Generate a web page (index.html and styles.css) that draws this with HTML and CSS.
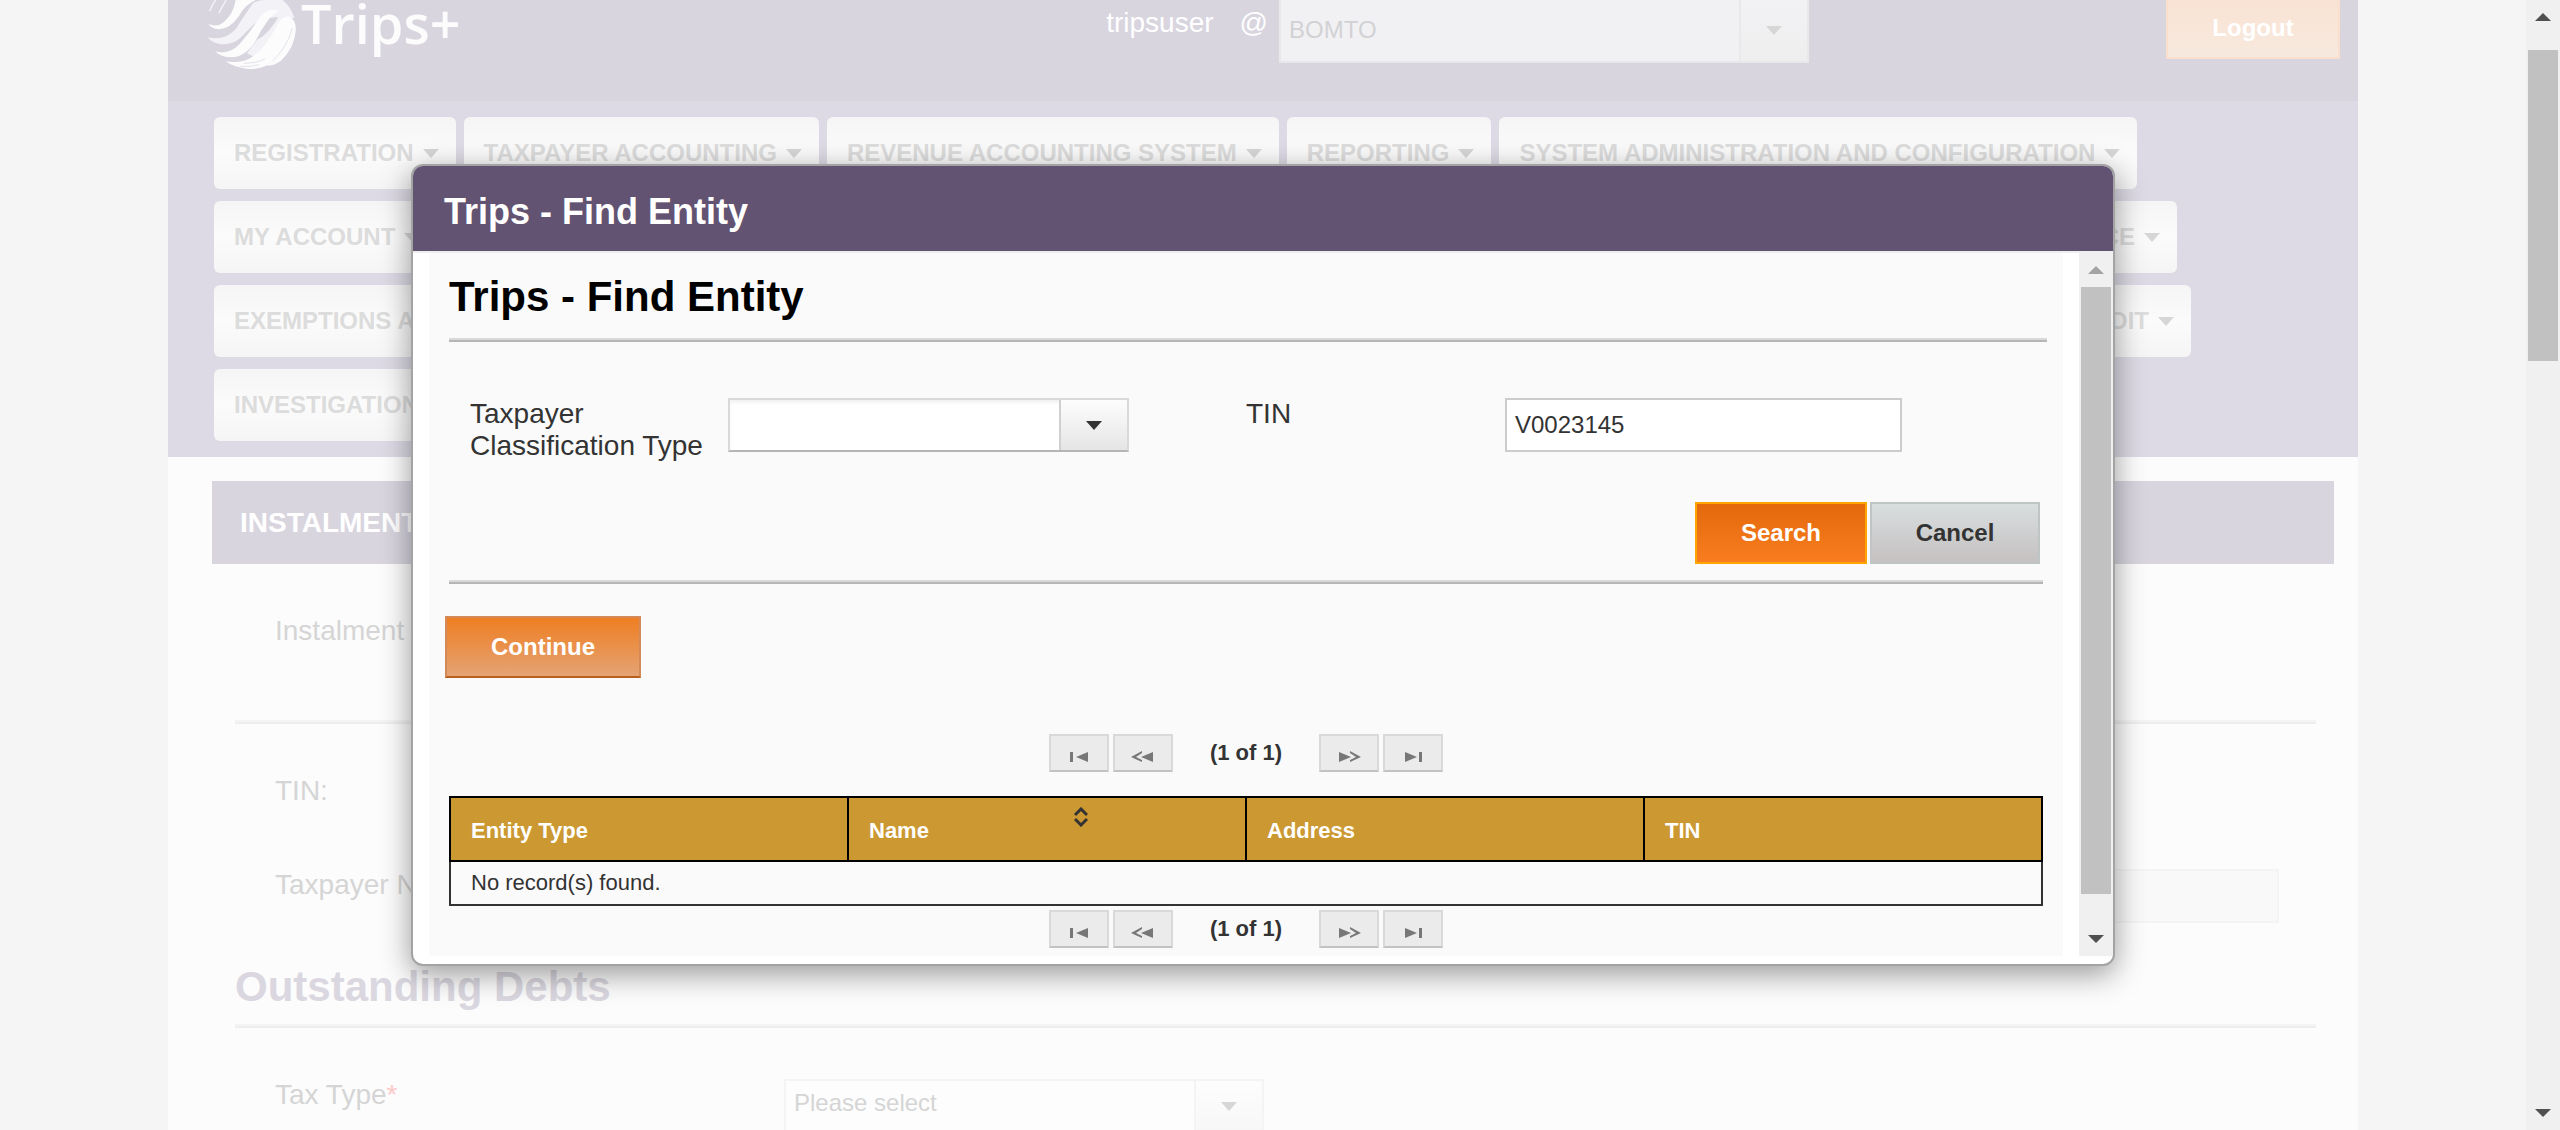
FILE: index.html
```html
<!DOCTYPE html>
<html lang="en">
<head>
<meta charset="utf-8">
<title>Trips - Find Entity</title>
<link rel="stylesheet" href="styles.css">
</head>
<body>
<div class="window">
  <div class="page">
    <header class="header">
      <div class="brand">
        <svg class="brand-mark" viewBox="0 0 276 210" aria-hidden="true">
          <g fill="#f3f3f7">
            <path d="M2 112Q52 124 86 88Q114 44 138 10Q152 0 172 0H226Q252 20 262 54Q240 60 222 50L160 56Q122 90 100 114Q74 136 38 132Q14 128 2 112Z"/>
            <path d="M150 120Q190 100 220 40L246 50Q210 130 160 180L120 160Z"/>
          </g>
          <g fill="#fcfcfd">
            <path d="M4 72Q30 82 48 68Q80 42 86 0H146Q112 16 96 48Q70 86 36 88Q14 86 4 72Z"/>
            <path d="M24 154Q66 166 98 132Q134 90 158 52Q186 18 216 34Q196 42 182 62Q160 92 146 122Q116 170 74 172Q42 172 24 154Z"/>
            <path d="M56 184Q106 192 136 170Q170 150 206 84Q222 44 248 50Q268 60 266 92Q262 144 222 182Q196 200 180 196Q160 208 122 207Q76 200 56 184Z"/>
          </g>
          <g fill="none" stroke="#d8d5df" stroke-width="2">
            <path d="M256 84Q242 140 196 184M110 190Q150 190 174 176M100 199Q130 202 156 194"/>
          </g>
          <path d="M8 34Q16 12 26 0M36 40Q46 16 58 0" fill="none" stroke="#f3f3f7" stroke-width="4"/>
        </svg>
        <span class="brand-name">Trips+</span>
      </div>
      <div class="account">
        <span>tripsuser</span>
        <label for="office">@</label>
        <div class="combo combo-office">
          <select id="office"><option>BOMTO</option></select>
          <span class="combo-arrow"></span>
        </div>
      </div>
      <button class="logout" type="button">Logout</button>
    </header>

    <nav class="menu">
      <div class="menu-row">
        <button type="button">REGISTRATION</button>
        <button type="button">TAXPAYER ACCOUNTING</button>
        <button type="button">REVENUE ACCOUNTING SYSTEM</button>
        <button type="button">REPORTING</button>
        <button type="button">SYSTEM ADMINISTRATION AND CONFIGURATION</button>
      </div>
      <div class="menu-row menu-row-compliance">
        <button type="button">MY ACCOUNT</button>
        <button type="button" class="menu-fill">COMPLIANCE</button>
      </div>
      <div class="menu-row menu-row-audit">
        <button type="button">EXEMPTIONS AND RELIEFS</button>
        <button type="button" class="menu-fill">AUDIT</button>
      </div>
      <div class="menu-row">
        <button type="button">INVESTIGATION</button>
      </div>
    </nav>

    <main class="content">
      <h1 class="content-title">INSTALMENT AGREEMENT</h1>
      <div class="content-body">
        <div class="row"><span>Instalment Agreement</span></div>
        <hr>
        <div class="row"><span>TIN:</span></div>
        <div class="row row-split">
          <label for="taxpayer-name">Taxpayer Name:</label>
          <input id="taxpayer-name" readonly>
        </div>
        <h2>Outstanding Debts</h2>
        <hr>
        <div class="row">
          <label class="row-label" for="tax-type">Tax Type<span class="required">*</span></label>
          <div class="combo combo-tax">
            <select id="tax-type"><option>Please select</option></select>
            <span class="combo-arrow"></span>
          </div>
        </div>
      </div>
    </main>
  </div>
  <div class="scrollbar page-scrollbar" aria-hidden="true">
    <div class="scroll-end"><i class="up"></i></div>
    <div class="track"><div class="thumb"></div></div>
    <div class="scroll-end"><i class="down"></i></div>
  </div>
</div>

<div class="overlay">
  <section class="dialog" role="dialog" aria-labelledby="dialog-title">
    <h2 class="dialog-title" id="dialog-title">Trips - Find Entity</h2>
    <div class="dialog-body">
      <div class="frame">
        <h3>Trips - Find Entity</h3>
        <hr class="rule-top">
        <form class="search">
          <label for="classification">Taxpayer Classification Type</label>
          <div class="combo combo-active">
            <select id="classification"><option></option></select>
            <span class="combo-arrow"></span>
          </div>
          <label for="tin">TIN</label>
          <input id="tin" type="text" value="V0023145">
        </form>
        <div class="actions">
          <button class="btn btn-search" type="button">Search</button>
          <button class="btn btn-cancel" type="button">Cancel</button>
        </div>
        <hr>
        <button class="btn btn-continue" type="button">Continue</button>
        <div class="pager pager-top">
          <button type="button" aria-label="First page"><svg viewBox="0 0 24 12"><path d="M3 1h3v10H3zM21 1v10L9 6z"/></svg></button>
          <button type="button" aria-label="Previous page"><svg viewBox="0 0 24 12"><path d="M22 1v10L10 6zM11 0L0 6l11 5V9L5 6l6-4z"/></svg></button>
          <span>(1 of 1)</span>
          <button type="button" aria-label="Next page"><svg viewBox="0 0 24 12"><path d="M2 1v10l12-5zM13 0l11 6l-11 5V9l6-3l-6-4z"/></svg></button>
          <button type="button" aria-label="Last page"><svg viewBox="0 0 24 12"><path d="M4 1v10l12-5zM18 1h3v10h-3z"/></svg></button>
        </div>
        <table>
          <thead>
            <tr>
              <th>Entity Type</th>
              <th><div class="sortable">Name
                <svg viewBox="0 0 14 20"><path d="M1 8l6-6 6 6M1 12l6 6 6-6"/></svg></div></th>
              <th>Address</th>
              <th>TIN</th>
            </tr>
          </thead>
          <tbody><tr><td colspan="4">No record(s) found.</td></tr></tbody>
        </table>
        <div class="pager">
          <button type="button" aria-label="First page"><svg viewBox="0 0 24 12"><path d="M3 1h3v10H3zM21 1v10L9 6z"/></svg></button>
          <button type="button" aria-label="Previous page"><svg viewBox="0 0 24 12"><path d="M22 1v10L10 6zM11 0L0 6l11 5V9L5 6l6-4z"/></svg></button>
          <span>(1 of 1)</span>
          <button type="button" aria-label="Next page"><svg viewBox="0 0 24 12"><path d="M2 1v10l12-5zM13 0l11 6l-11 5V9l6-3l-6-4z"/></svg></button>
          <button type="button" aria-label="Last page"><svg viewBox="0 0 24 12"><path d="M4 1v10l12-5zM18 1h3v10h-3z"/></svg></button>
        </div>
      </div>
      <div class="scrollbar dialog-scrollbar" aria-hidden="true">
        <div class="scroll-end"><i class="up"></i></div>
        <div class="track"><div class="thumb"></div></div>
        <div class="scroll-end"><i class="down"></i></div>
      </div>
    </div>
  </section>
</div>
</body>
</html>
```
FILE: styles.css
```css
* { box-sizing: border-box; }

body {
  margin: 0;
  background: #f5f5f5;
  color: #333;
  font: 28px/32px "Liberation Sans", Arial, sans-serif;
}

h1, h2, h3 { margin: 0; }

button, input, select {
  margin: 0;
  border-radius: 0;
  font: inherit;
  color: inherit;
}

hr {
  height: 4px;
  margin: 0;
  border: 0;
  border-top: 2px solid #d9d9d9;
  border-bottom: 2px solid #b5b5b5;
}

.window {
  display: flex;
  height: 100vh;
  overflow: hidden;
}

.page {
  flex: 1;
  margin: 0 168px;
  background: #fcfcfc;
  color: #d5d5d5;
}

/* Header */
.header {
  display: flex;
  align-items: flex-start;
  height: 101px;
  padding: 0 18px 0 39px;
  background: #d8d5df;
  color: #fff;
}

.brand {
  display: flex;
  flex: 1;
  gap: 2px;
}

.brand-mark {
  width: 92px;
  height: 70px;
}

.brand-name {
  font: 600 54px/46px "Open Sans", sans-serif;
  color: #fcfcfd;
}

.account {
  display: flex;
  gap: 26px;
}

.account > span, .account > label { padding-top: 7px; }
.account .combo { margin-left: -15px; }

.logout {
  width: 174px;
  height: 59px;
  margin-left: 357px;
  padding: 0 0 2px;
  border: 2px solid #fae0cc;
  border-top: 0;
  background: linear-gradient(#f9e3d3, #f7e9de);
  font-size: 24px;
  font-weight: bold;
}

/* Drop-downs: the arrow box sits over the select's right end */
.combo {
  display: grid;
  grid-template-columns: 1fr 68px;
  height: 54px;
  border: 2px solid #f4f4f4;
}

.combo select {
  grid-area: 1 / 1 / 2 / 3;
  appearance: none;
  border: 0;
  padding: 0 8px;
  background: none;
  font-size: 24px;
  opacity: 1;
}

.combo-arrow {
  grid-area: 1 / 2;
  display: grid;
  place-items: center;
  border-left: 2px solid #f4f4f4;
  background: linear-gradient(#fdfdfd, #f7f7f7);
  pointer-events: none;
}

.combo-arrow::before {
  content: "";
  border: 8px solid transparent;
  border-top: 9px solid #d6d6d6;
  border-bottom: 0;
}

.combo-office {
  width: 530px;
  height: 63px;
  border-color: #e8e8ea;
  border-top: 0;
  background: #f1f1f4;
  color: #d2d2d4;
}

.combo-office select { padding-bottom: 2px; }

.combo-office .combo-arrow {
  border-color: #e9e9eb;
  background: linear-gradient(#f2f2f4, #eeeeef);
}

.combo-tax {
  width: 480px;
  background: #fdfdfd;
}

.combo-tax select { padding-bottom: 6px; }

/* Menu */
.menu {
  display: flex;
  flex-direction: column;
  gap: 12px;
  padding: 16px 0 16px 46px;
  background: #dddae5;
}

.menu-row {
  display: flex;
  gap: 8px;
}

.menu-row-compliance { margin-right: 181px; }
.menu-row-audit { margin-right: 167px; }

.menu button {
  display: flex;
  align-items: center;
  gap: 9px;
  height: 72px;
  padding: 0 17px 0 20px;
  border: 0;
  border-radius: 6px;
  background: linear-gradient(#f5f5f5, #fbfbfb 50%, #f5f5f5);
  color: #dcdcdc;
  font-size: 24px;
  font-weight: bold;
  white-space: nowrap;
}

.menu button::after {
  content: "";
  border: 8px solid transparent;
  border-top: 9px solid #d6d6d6;
  border-bottom: 0;
}

.menu .menu-fill {
  flex: 1;
  justify-content: flex-end;
}

/* Page content */
.content { padding: 24px 24px 0 44px; }

.content-title {
  padding: 26px 28px 25px;
  background: #d8d5df;
  color: #fff;
  font-size: 28px;
}

.content-body { padding: 51px 18px 0 23px; }

.content-body hr {
  margin-bottom: 51px;
  border-color: #f4f4f4 transparent #eee;
}

.row {
  display: flex;
  height: 54px;
  padding: 0 37px 0 40px;
}

.row + hr { margin-top: 51px; }
.row-split {
  justify-content: space-between;
  margin-top: 40px;
}

.row input {
  width: 484px;
  border: 2px solid #f4f4f4;
  background: #f9f9f9;
}

.row-label { width: 509px; }
.required { color: #fcc9c9; }

.content-body h2 {
  margin: 40px 0 13px;
  color: #dad7e0;
  font-size: 42px;
  line-height: 48px;
}

/* Scrollbars */
.scrollbar {
  display: flex;
  flex-direction: column;
  width: 34px;
  background: #f0f0f0;
}

.scroll-end {
  display: grid;
  place-items: center;
  height: 34px;
}

.scroll-end i { border: 8px solid transparent; }
.scroll-end .up { border-top: 0; border-bottom-color: #505050; }
.scroll-end .down { border-bottom: 0; border-top-color: #505050; }

.track {
  display: flex;
  flex: 1;
  flex-direction: column;
  padding: 0 2px;
}

.thumb { background: #c1c1c1; }
.page-scrollbar .track::before { content: ""; flex: 16; }
.page-scrollbar .thumb { flex: 311; }
.page-scrollbar .track::after { content: ""; flex: 735; }
.dialog-scrollbar .thumb { flex: 608; }
.dialog-scrollbar .track::after { content: ""; flex: 28; }
.dialog-scrollbar .up { border-bottom-color: #a3a3a3; }

/* Dialog */
.overlay {
  position: absolute;
  top: 164px;
  right: 34px;
  left: 0;
  padding: 0 411px;
}

.dialog {
  overflow: hidden;
  border: 2px solid #a3a3a3;
  border-radius: 12px;
  background: #fff;
  box-shadow: 0 8px 30px rgba(0, 0, 0, 0.4);
}

.dialog-title {
  padding: 26px 31px 19px;
  border-bottom: 2px solid #eee;
  background: #625372;
  color: #fff;
  font-size: 36px;
  line-height: 40px;
}

.dialog-body {
  display: flex;
  gap: 16px;
  padding: 0 0 8px 16px;
}

.frame {
  flex: 1;
  padding: 20px 16px 8px;
  background: #fafafa;
}

.frame > hr { margin: 16px 4px 32px; }

.frame h3 {
  margin: 0 4px;
  color: #000;
  font-size: 42px;
  line-height: 48px;
}

.frame .rule-top { margin: 17px 0 56px 4px; }

.search {
  display: grid;
  grid-template-columns: 258px 518fr 259px 538fr;
  align-items: start;
  padding: 0 4px 0 25px;
}

.search input {
  width: 397px;
  height: 54px;
  padding: 0 8px;
  border: 2px solid #ccc;
  background: #fff;
  font-size: 24px;
}

.combo-active {
  width: 401px;
  border-color: #d9d9d9 #d9d9d9 #b5b5b5;
  background: #fff;
  box-shadow: inset 0 4px 4px -2px #eee;
}

.combo-active .combo-arrow {
  border-color: #d0d0d0;
  background: linear-gradient(#fdfdfd, #e5e5e5);
}

.combo-active .combo-arrow::before { border-top-color: #333; }

.actions {
  display: flex;
  justify-content: flex-end;
  gap: 3px;
  margin-top: 40px;
  padding-right: 7px;
}

.btn {
  height: 62px;
  border: 2px solid;
  color: #fff;
  font-size: 24px;
  font-weight: bold;
}

.btn-search {
  width: 172px;
  border-color: #ffa500;
  background: linear-gradient(#e3690c, #f97d1f);
}

.btn-cancel {
  width: 170px;
  border-color: #bfc4c4;
  background: linear-gradient(#d9dedf, #c5c1c1);
  color: #333;
}

.btn-continue {
  display: block;
  width: 196px;
  border-color: #d38a58 #d38a58 #b9601c;
  background: linear-gradient(#ee7e22, #e5a374);
}

.pager {
  display: flex;
  justify-content: center;
  align-items: center;
  gap: 4px;
  height: 38px;
  margin-top: 4px;
  font-size: 22px;
  font-weight: bold;
}

.pager-top { margin: 56px 0 24px; }
.pager span { margin: 0 33px; }

.pager button {
  width: 60px;
  height: 38px;
  padding: 8px 0 0;
  border: 2px solid #d9d9d9;
  border-bottom-color: #c2c2c2;
  background: #ebebeb;
  line-height: 0;
}

.pager svg {
  width: 24px;
  height: 12px;
  fill: #777;
}

table {
  width: calc(100% - 8px);
  margin: 0 4px;
  border-collapse: collapse;
  table-layout: fixed;
  font-size: 22px;
}

th, td {
  padding: 0 20px;
  text-align: left;
}

th {
  height: 64px;
  padding-top: 3px;
  border: 2px solid #000;
  background: #cb9832;
  color: #fff;
}

td {
  height: 44px;
  border: 2px solid #333;
}

.sortable {
  display: flex;
  align-items: flex-start;
  gap: 145px;
}

.sortable svg {
  width: 14px;
  height: 20px;
  margin-top: -8px;
  fill: none;
  stroke: #333;
  stroke-width: 3;
}
```
